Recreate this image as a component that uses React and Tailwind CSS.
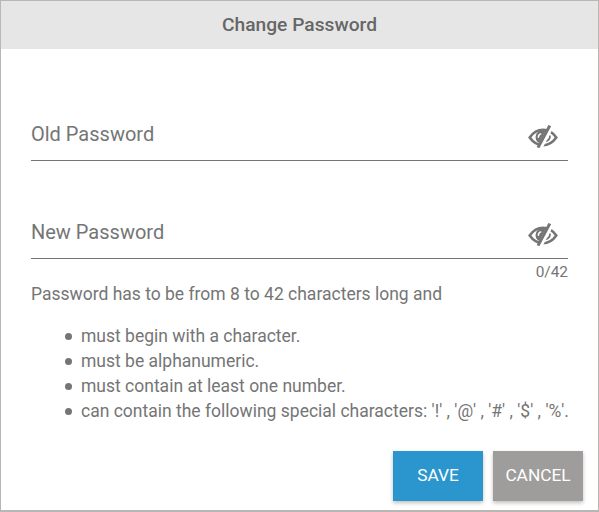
const EyeOff = () => (
  <svg width="30" height="23" viewBox="0 0 30 23" fill="none" className="mt-[14px] block">
    <path stroke="#757575" strokeWidth="2.6" d="M1.700 12.500C5 7.800 9.800 4.800 15 4.800s10 3 13.300 7.700C25 17.200 20.200 20.200 15 20.200S5 17.200 1.700 12.500Z" />
    <path fill="#757575" d="M18 5 11.200 18C8.800 16.900 7.600 14.600 7.600 12.400c0-3.900 3.200-7.400 7.400-7.400 1 0 2 0 3 0Z" />
    <path stroke="#fff" strokeWidth="1.500" strokeLinecap="round" d="M10.400 12.200c0-1.500.8-2.800 2.300-3.300" />
    <path stroke="#757575" strokeWidth="1.700" d="M22 10.500c.2 2.800-1.700 5-4.500 6" />
    <path stroke="#fff" strokeWidth="4.400" d="M23 2.400 12.200 23" />
    <path stroke="#757575" strokeWidth="3" d="M21.800 0.600 10 22.600" />
  </svg>
);

const PasswordField = ({ label }) => (
  <div className="flex h-[50px] items-start justify-between border-b border-[#757575] pr-[10px]">
    <span className="mt-[11px] text-[20px] leading-[24px] text-[#757575]">{label}</span>
    <EyeOff />
  </div>
);

const RULES = [
  "must begin with a character.",
  "must be alphanumeric.",
  "must contain at least one number.",
  "can contain the following special characters: '!' , '@' , '#' , '$' , '%'.",
];

export default function App() {
  return (
    <div className="box-border h-[512px] w-[599px] border-t border-r border-b-2 border-l border-[#b9b6b6] bg-white font-['Roboto',sans-serif] text-[#757575]">
      <div className="flex h-[48px] items-center justify-center bg-[#e6e6e6] text-[19.2px] font-medium text-[#666666]">
        Change Password
      </div>
      <div className="px-[30px] pt-[62px]">
        <PasswordField label="Old Password" />
        <div className="mt-[48px]">
          <PasswordField label="New Password" />
        </div>
        <div className="mt-[5px] text-right text-[15.4px] leading-[16px]">0/42</div>
        <p className="mt-[2px] text-[17.5px] leading-[25px]">Password has to be from 8 to 42 characters long and</p>
        <ul className="mt-[17px] pl-[34px] text-[17.5px] leading-[25px]">
          {RULES.map((rule) => (
            <li key={rule} className="flex items-center gap-[9px] whitespace-nowrap">
              <span className="h-[7px] w-[7px] shrink-0 rounded-full bg-[#757575]" />
              {rule}
            </li>
          ))}
        </ul>
        <div className="mt-[27px] -mr-[15px] flex justify-end gap-[10px]">
          <button className="h-[50px] w-[90px] bg-[#2a96cd] text-[17.3px] text-white shadow-[0_2px_4px_rgba(0,0,0,0.25)]">SAVE</button>
          <button className="h-[50px] w-[90px] bg-[#9e9d9b] text-[17.3px] text-white shadow-[0_2px_4px_rgba(0,0,0,0.25)]">CANCEL</button>
        </div>
      </div>
    </div>
  );
}
